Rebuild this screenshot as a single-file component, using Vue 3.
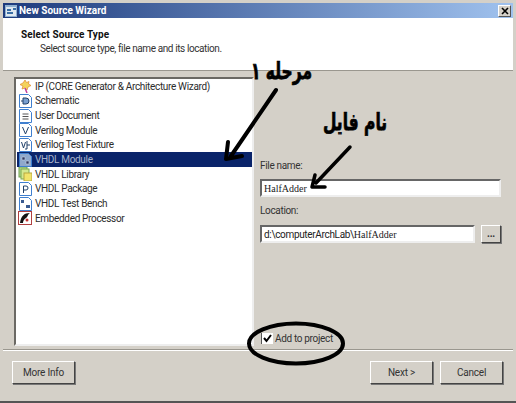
<template>
  <div class="window">
    <div class="titlebar">
      <svg class="app-icon" width="12" height="12" viewBox="0 0 12 12">
        <rect x="0" y="0" width="12" height="12" fill="#8fb0d0" />
        <rect x="1" y="2" width="10" height="9" fill="#dfe8f0" />
        <path d="M2 5h4M2 8h6M8 4h3" stroke="#3a6ea5" stroke-width="2" />
      </svg>
      <span class="title">New Source Wizard</span>
      <span class="close">
        <svg width="8" height="8" viewBox="0 0 8 8">
          <path d="M1 1l6 6M7 1l-6 6" stroke="#000" stroke-width="1.6" />
        </svg>
      </span>
    </div>

    <div class="header">
      <div class="header-title">Select Source Type</div>
      <div class="header-sub">Select source type, file name and its location.</div>
    </div>

    <div class="body">
      <ul class="source-list">
        <li v-for="item in sources" :key="item.label" class="source" :class="{ selected: item.selected }">
          <span class="source-icon">
            <svg v-if="item.icon === 'ip'" width="14" height="14" viewBox="0 0 14 14">
              <path d="M7 1l1.500 2.500L11 2.500 10.500 5 13 6.500 10 8l-1 3-2-2-3 1 1-3-3-1.500L5 4z" fill="#f4d35a" stroke="#e08a30" stroke-width="0.700" />
              <path d="M7 9l2 5" stroke="#c040a0" stroke-width="1.500" />
            </svg>
            <svg v-else-if="item.icon === 'lib'" width="14" height="14" viewBox="0 0 14 14">
              <rect x="1" y="0" width="8" height="10" fill="#b8dc90" stroke="#6ea050" />
              <rect x="3" y="2" width="8" height="10" fill="#d4e890" stroke="#7aa850" />
              <rect x="6" y="6" width="8" height="8" fill="#f2e36a" stroke="#b8a840" />
            </svg>
            <svg v-else-if="item.icon === 'cpu'" width="14" height="14" viewBox="0 0 14 14">
              <rect x="0.500" y="0.500" width="13" height="13" fill="#fff" stroke="#b04040" />
              <path d="M2 12C3 5 6 2 12 2 9 4 10 6 8 7 6 8 5 10 5 12z" fill="#111" />
              <circle cx="9" cy="9" r="1.500" fill="#c03030" />
            </svg>
            <svg v-else width="13" height="14" viewBox="0 0 13 14">
              <path d="M0.500 0.500h9l3 3v10h-12z" :fill="item.selected ? '#8fa8cc' : '#fff'" stroke="#3f7fcf" />
              <path v-if="item.icon === 'sch'" d="M4 4h3a3 3 0 010 6H4zM2 7h2" fill="#7aa0d0" stroke="#20406a" />
              <path v-else-if="item.icon === 'doc'" d="M3.500 5h6M3.500 7.500h6M3.500 10h6" stroke="#555" />
              <path v-else-if="item.icon === 'v'" d="M3.500 4l3 7 3-7" fill="none" stroke="#20406a" />
              <path v-else-if="item.icon === 'vt'" d="M2.500 4l2 6 2-6M8 3v8M8 11H6M8 7h3" fill="none" stroke="#20406a" />
              <path v-else-if="item.icon === 'vhdl'" d="M3 4h3v3H3zM7 8h3v3H7z" fill="#303860" stroke="#c8d0e0" stroke-width="0.600" />
              <path v-else-if="item.icon === 'p'" d="M4.500 11V4h2.500a2 2 0 010 4H4.500" fill="none" stroke="#20406a" />
              <path v-else-if="item.icon === 'vb'" d="M2 3h3v3H2zM7 8h4v3H7z" fill="#3a5a90" />
            </svg>
          </span>
          <span class="source-label">{{ item.label }}</span>
        </li>
      </ul>

      <div class="side">
        <label class="field-label name-label">File name:</label>
        <div class="input name-input serif">HalfAdder</div>
        <label class="field-label loc-label">Location:</label>
        <div class="loc-row">
          <div class="input loc-input">d:\computerArchLab\<span class="serif">HalfAdder</span></div>
          <button class="btn browse">...</button>
        </div>
        <div class="add-row">
          <span class="check">
            <svg width="9" height="9" viewBox="0 0 9 9">
              <path d="M1 4l2.500 3L8 1" fill="none" stroke="#000" stroke-width="2" />
            </svg>
          </span>
          <span class="add-label">Add to project</span>
        </div>
      </div>
    </div>

    <div class="footer">
      <button class="btn">More Info</button>
      <span class="spacer"></span>
      <button class="btn">Next &gt;</button>
      <button class="btn">Cancel</button>
    </div>

    <!-- notes drawn on top of the screenshot -->
    <span class="note note-step" dir="rtl">مرحله ۱</span>
    <span class="note note-file" dir="rtl">نام فایل</span>
    <svg class="marks" width="516" height="403" viewBox="0 0 516 403">
      <path d="M276 90L231 156M226 159l2-17M226 159l16-3" fill="none" stroke="#000" stroke-width="4" stroke-linecap="round" />
      <path d="M350 147L316 183M312 187l3-12M312 187l13 0" fill="none" stroke="#000" stroke-width="3.500" stroke-linecap="round" />
      <ellipse cx="296" cy="343.500" rx="47" ry="20" fill="none" stroke="#000" stroke-width="4" />
    </svg>
  </div>
</template>

<script setup>
const sources = [
  { label: 'IP (CORE Generator & Architecture Wizard)', icon: 'ip' },
  { label: 'Schematic', icon: 'sch' },
  { label: 'User Document', icon: 'doc' },
  { label: 'Verilog Module', icon: 'v' },
  { label: 'Verilog Test Fixture', icon: 'vt' },
  { label: 'VHDL Module', icon: 'vhdl', selected: true },
  { label: 'VHDL Library', icon: 'lib' },
  { label: 'VHDL Package', icon: 'p' },
  { label: 'VHDL Test Bench', icon: 'vb' },
  { label: 'Embedded Processor', icon: 'cpu' }
]
</script>

<style>
html,
body {
  margin: 0;
  background: #d4d0c8;
}
</style>

<style scoped>
.window {
  position: relative;
  width: 516px;
  height: 403px;
  box-sizing: border-box;
  padding: 3px;
  background: #d4d0c8;
  border-bottom: 2px solid #555;
  font-family: Roboto, "Liberation Sans", Arial, sans-serif;
  font-size: 10px;
  letter-spacing: -0.33px;
  color: #222;
  display: flex;
  flex-direction: column;
  overflow: hidden;
}

.titlebar {
  height: 15px;
  flex: none;
  display: flex;
  align-items: center;
  padding: 0 2px;
  background: linear-gradient(90deg, #1d3a7c, #a0c2ee);
  color: #fff;
}

.app-icon {
  margin-right: 2px;
}

.title {
  font-weight: bold;
  letter-spacing: 0;
  flex: 1;
}

.close {
  width: 13px;
  height: 12px;
  background: #d4d0c8;
  border: 1px solid;
  border-color: #fff #555 #555 #fff;
  box-sizing: border-box;
  display: flex;
  align-items: center;
  justify-content: center;
}

.header {
  height: 53px;
  flex: none;
  box-sizing: border-box;
  background: #fff;
  border-bottom: 1px solid #9a978f;
  padding: 10px 0 0 18px;
}

.header-title {
  font-weight: bold;
  letter-spacing: 0.1px;
  line-height: 14px;
  color: #111;
}

.header-sub {
  padding-left: 19px;
  letter-spacing: -0.4px;
  line-height: 14px;
  color: #333;
}

.body {
  flex: 1;
  min-height: 0;
  display: flex;
  padding: 6px 0 0 11px;
  border-bottom: 1px solid #9a978f;
  box-shadow: 0 1px 0 #fff;
}

.source-list {
  width: 240px;
  height: 269px;
  box-sizing: border-box;
  margin: 0;
  padding: 0 0 0 1px;
  list-style: none;
  background: #fff;
  border: 2px solid;
  border-color: #6b6964 #eee #eee #6b6964;
  flex: none;
}

.source {
  height: 14.670px;
  display: flex;
  align-items: center;
  color: #2c2c2c;
}

.source.selected {
  background: #0a246a;
  color: #a9b4cc;
}

.source-icon {
  width: 16px;
  flex: none;
  display: flex;
  justify-content: center;
  margin-right: 2px;
}

.source-label {
  white-space: nowrap;
}

.side {
  flex: 1;
  display: flex;
  flex-direction: column;
  padding: 0 12px 0 6px;
}

.field-label {
  line-height: 14px;
  color: #333;
}

.name-label {
  margin-top: 82px;
}

.loc-label {
  margin-top: 7px;
}

.input {
  height: 18px;
  box-sizing: border-box;
  background: #fff;
  border: 2px solid;
  border-color: #666 #eee #eee #666;
  line-height: 15px;
  padding-left: 2px;
  white-space: nowrap;
}

.name-input {
  margin-top: 6px;
}

.serif {
  font-family: "Liberation Serif", "Times New Roman", serif;
  font-size: 10px;
  letter-spacing: 0;
}

.loc-row {
  margin-top: 7px;
  display: flex;
  gap: 6px;
}

.loc-input {
  flex: 1;
}

.add-row {
  margin-top: 90px;
  display: flex;
  align-items: center;
  gap: 2px;
}

.check {
  width: 11px;
  height: 11px;
  background: #fff;
  border-left: 1px solid #555;
  display: flex;
  align-items: center;
  justify-content: center;
  margin-left: 1px;
}

.add-label {
  color: #333;
}

.footer {
  height: 48px;
  flex: none;
  box-sizing: border-box;
  display: flex;
  align-items: flex-start;
  gap: 7px;
  padding: 11px 10px 0 9px;
}

.spacer {
  flex: 1;
}

.btn {
  width: 63px;
  height: 23px;
  box-sizing: border-box;
  padding: 0;
  background: #d4d0c8;
  border: 1px solid;
  border-color: #fff #444 #444 #fff;
  box-shadow: 1px 1px 0 #777;
  font-family: Roboto, "Liberation Sans", Arial, sans-serif;
  font-size: 10px;
  letter-spacing: -0.2px;
  color: #333;
}

.browse {
  width: 20px;
  height: 18px;
  font-weight: bold;
  line-height: 10px;
  flex: none;
}

.note {
  position: absolute;
  font-family: "DejaVu Sans", sans-serif;
  font-weight: bold;
  color: #000;
  white-space: nowrap;
  letter-spacing: 0;
  -webkit-text-stroke: 0.5px #000;
  transform-origin: left top;
  transform: scaleY(1.5);
}

.note-step {
  left: 251px;
  top: 58px;
  font-size: 15.500px;
}

.note-file {
  left: 323px;
  top: 109px;
  font-size: 15.500px;
}

.marks {
  position: absolute;
  left: 0;
  top: 0;
  pointer-events: none;
}
</style>
